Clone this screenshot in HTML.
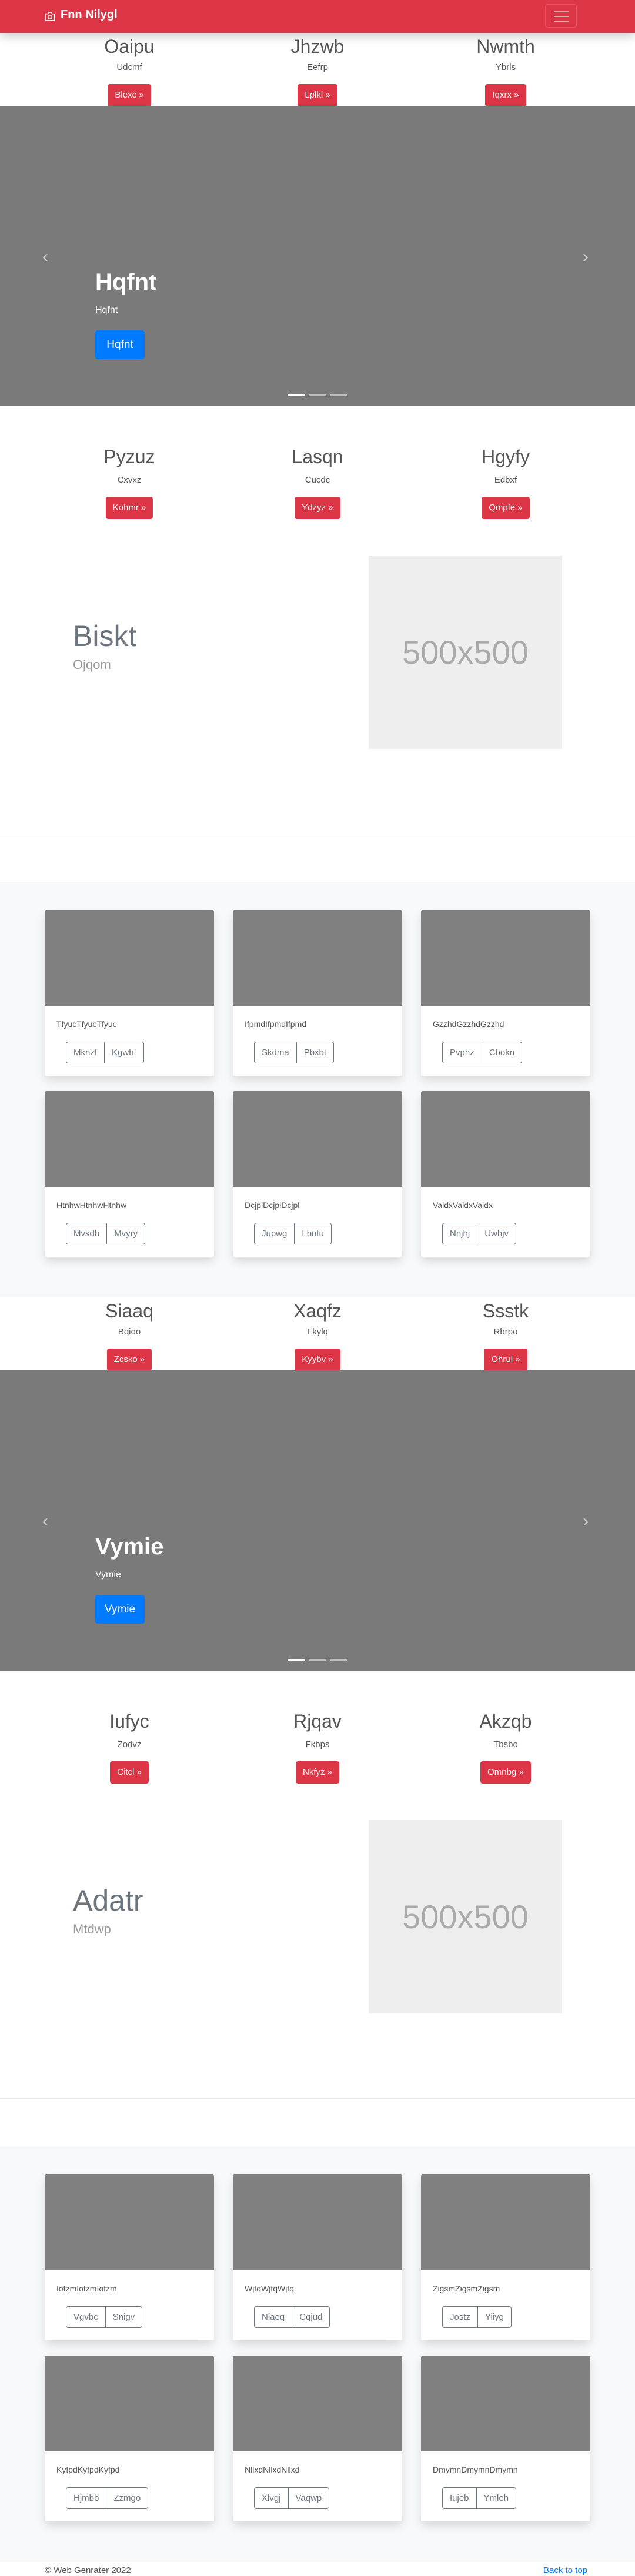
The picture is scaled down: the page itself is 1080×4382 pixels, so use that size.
<!DOCTYPE html>
<html><head><meta charset="utf-8"><style>
*{box-sizing:border-box;margin:0;padding:0}
body{width:1080px;height:4382px;position:relative;background:#fff;font-family:"Liberation Sans",sans-serif;color:#555;overflow:hidden}
.a{position:absolute}
.nav{left:0;top:0;width:1080px;height:56px;background:#dc3545;box-shadow:0 6px 16px rgba(0,0,0,.2);z-index:5}
.brand{left:103px;top:14px;color:#fff;font-weight:bold;font-size:20px}
.tog{left:927px;top:7px;width:54px;height:40px;border:1px solid rgba(255,255,255,.15);border-radius:4px}
.tog i{position:absolute;left:14px;width:26px;height:2px;background:rgba(255,255,255,.55)}
.col{width:360px;text-align:center}
.h{font-size:32px;line-height:38px;color:#555}
.s{font-size:15px;line-height:20px;color:#555}
.rb{display:inline-block;background:#dc3545;color:#fff;font-size:15px;padding:0 12px;height:38px;line-height:38px;border-radius:4px}
.car{left:0;width:1080px;height:511px;background:#7a7a7a}
.arr{font-size:30px;color:#ccc}
.ct{color:#fff;font-size:40px;font-weight:bold}
.bb{background:#007bff;color:#fff;font-size:19px;border-radius:4px;width:84px;height:49px;line-height:49px;text-align:center}
.ind{height:3px;width:30px;background:rgba(255,255,255,.5)}
.img{width:329px;height:329px;background:#eee;color:#aaa;font-size:56px;text-align:center;line-height:329px}
.gray{left:0;width:1080px;height:707px;background:#f8f9fa}
.card{width:288px;height:282px;background:#fff;box-shadow:0 8px 16px rgba(0,0,0,.12);border-radius:3px;overflow:hidden}
.card .im{height:163px;background:#808080}
.card .t{position:absolute;left:20px;top:186px;font-size:14px;color:#555}
.bg{position:absolute;left:36px;top:224px;height:37px;display:flex;border:1px solid #6c757d;border-radius:4px}
.bg span{padding:0 12px;line-height:35px;font-size:15px;color:#6c757d}
.bg span+span{border-left:1px solid #6c757d}
</style></head><body>
<div class="a nav">
<svg class="a" style="left:75px;top:18px" width="20" height="20" viewBox="0 0 16 16" fill="none" stroke="#fff" stroke-width="1.2"><path d="M2 4.5h3l1.2-2h3.6l1.2 2h3v9H2z"/><circle cx="8" cy="8.8" r="2.6"/></svg>
<div class="a brand">Fnn Nilygl</div>
<div class="a tog"><i style="top:11px"></i><i style="top:19px"></i><i style="top:27px"></i></div>
</div>

<!-- BLOCK A -->
<div class="a col" style="left:40px;top:60px"><div class="h">Oaipu</div><div class="s" style="margin-top:7px">Udcmf</div><div style="margin-top:18px"><span class="rb">Blexc »</span></div></div>
<div class="a col" style="left:360px;top:60px"><div class="h">Jhzwb</div><div class="s" style="margin-top:7px">Eefrp</div><div style="margin-top:18px"><span class="rb">Lplkl »</span></div></div>
<div class="a col" style="left:680px;top:60px"><div class="h">Nwmth</div><div class="s" style="margin-top:7px">Ybrls</div><div style="margin-top:18px"><span class="rb">Iqxrx »</span></div></div>
<div class="a car" style="top:180px">
<div class="a arr" style="left:72px;top:240px">‹</div><div class="a arr" style="left:991px;top:240px">›</div>
<div class="a ct" style="left:162px;top:278px">Hqfnt</div>
<div class="a" style="left:162px;top:339px;color:#fff;font-size:16px">Hqfnt</div>
<div class="a bb" style="left:162px;top:382px">Hqfnt</div>
<div class="a ind" style="left:489px;top:491px;background:#fff"></div><div class="a ind" style="left:525px;top:491px"></div><div class="a ind" style="left:561px;top:491px"></div>
</div>
<div class="a col" style="left:40px;top:758px"><div class="h">Pyzuz</div><div class="s" style="margin-top:11px">Cxvxz</div><div style="margin-top:18px"><span class="rb">Kohmr »</span></div></div>
<div class="a col" style="left:360px;top:758px"><div class="h">Lasqn</div><div class="s" style="margin-top:11px">Cucdc</div><div style="margin-top:18px"><span class="rb">Ydzyz »</span></div></div>
<div class="a col" style="left:680px;top:758px"><div class="h">Hgyfy</div><div class="s" style="margin-top:11px">Edbxf</div><div style="margin-top:18px"><span class="rb">Qmpfe »</span></div></div>
<div class="a" style="left:124px;top:1053px;font-size:50px;color:#6c757d">Biskt</div>
<div class="a" style="left:124px;top:1118px;font-size:22px;color:#999;font-weight:300">Ojqom</div>
<div class="a img" style="left:627px;top:945px">500x500</div>
<div class="a" style="left:0;top:1418px;width:1080px;height:1px;background:#e6e6e6"></div>
<div class="a gray" style="top:1500px"></div>
<div class="a card" style="left:76px;top:1548px"><div class="im"></div><div class="t">TfyucTfyucTfyuc</div><div class="bg"><span>Mknzf</span><span>Kgwhf</span></div></div>
<div class="a card" style="left:396px;top:1548px"><div class="im"></div><div class="t">IfpmdIfpmdIfpmd</div><div class="bg"><span>Skdma</span><span>Pbxbt</span></div></div>
<div class="a card" style="left:716px;top:1548px"><div class="im"></div><div class="t">GzzhdGzzhdGzzhd</div><div class="bg"><span>Pvphz</span><span>Cbokn</span></div></div>
<div class="a card" style="left:76px;top:1856px"><div class="im"></div><div class="t">HtnhwHtnhwHtnhw</div><div class="bg"><span>Mvsdb</span><span>Mvyry</span></div></div>
<div class="a card" style="left:396px;top:1856px"><div class="im"></div><div class="t">DcjplDcjplDcjpl</div><div class="bg"><span>Jupwg</span><span>Lbntu</span></div></div>
<div class="a card" style="left:716px;top:1856px"><div class="im"></div><div class="t">ValdxValdxValdx</div><div class="bg"><span>Nnjhj</span><span>Uwhjv</span></div></div>

<!-- BLOCK B (offset 2151) -->
<div class="a col" style="left:40px;top:2211px"><div class="h">Siaaq</div><div class="s" style="margin-top:7px">Bqioo</div><div style="margin-top:18px"><span class="rb">Zcsko »</span></div></div>
<div class="a col" style="left:360px;top:2211px"><div class="h">Xaqfz</div><div class="s" style="margin-top:7px">Fkylq</div><div style="margin-top:18px"><span class="rb">Kyybv »</span></div></div>
<div class="a col" style="left:680px;top:2211px"><div class="h">Ssstk</div><div class="s" style="margin-top:7px">Rbrpo</div><div style="margin-top:18px"><span class="rb">Ohrul »</span></div></div>
<div class="a car" style="top:2331px">
<div class="a arr" style="left:72px;top:240px">‹</div><div class="a arr" style="left:991px;top:240px">›</div>
<div class="a ct" style="left:162px;top:278px">Vymie</div>
<div class="a" style="left:162px;top:339px;color:#fff;font-size:16px">Vymie</div>
<div class="a bb" style="left:162px;top:382px">Vymie</div>
<div class="a ind" style="left:489px;top:491px;background:#fff"></div><div class="a ind" style="left:525px;top:491px"></div><div class="a ind" style="left:561px;top:491px"></div>
</div>
<div class="a col" style="left:40px;top:2909px"><div class="h">Iufyc</div><div class="s" style="margin-top:11px">Zodvz</div><div style="margin-top:18px"><span class="rb">Citcl »</span></div></div>
<div class="a col" style="left:360px;top:2909px"><div class="h">Rjqav</div><div class="s" style="margin-top:11px">Fkbps</div><div style="margin-top:18px"><span class="rb">Nkfyz »</span></div></div>
<div class="a col" style="left:680px;top:2909px"><div class="h">Akzqb</div><div class="s" style="margin-top:11px">Tbsbo</div><div style="margin-top:18px"><span class="rb">Omnbg »</span></div></div>
<div class="a" style="left:124px;top:3204px;font-size:50px;color:#6c757d">Adatr</div>
<div class="a" style="left:124px;top:3269px;font-size:22px;color:#999;font-weight:300">Mtdwp</div>
<div class="a img" style="left:627px;top:3096px">500x500</div>
<div class="a" style="left:0;top:3569px;width:1080px;height:1px;background:#e6e6e6"></div>
<div class="a gray" style="top:3651px;height:708px"></div>
<div class="a card" style="left:76px;top:3699px"><div class="im"></div><div class="t">IofzmIofzmIofzm</div><div class="bg"><span>Vgvbc</span><span>Snigv</span></div></div>
<div class="a card" style="left:396px;top:3699px"><div class="im"></div><div class="t">WjtqWjtqWjtq</div><div class="bg"><span>Niaeq</span><span>Cqjud</span></div></div>
<div class="a card" style="left:716px;top:3699px"><div class="im"></div><div class="t">ZigsmZigsmZigsm</div><div class="bg"><span>Jostz</span><span>Yiiyg</span></div></div>
<div class="a card" style="left:76px;top:4007px"><div class="im"></div><div class="t">KyfpdKyfpdKyfpd</div><div class="bg"><span>Hjmbb</span><span>Zzmgo</span></div></div>
<div class="a card" style="left:396px;top:4007px"><div class="im"></div><div class="t">NllxdNllxdNllxd</div><div class="bg"><span>Xlvgj</span><span>Vaqwp</span></div></div>
<div class="a card" style="left:716px;top:4007px"><div class="im"></div><div class="t">DmymnDmymnDmymn</div><div class="bg"><span>Iujeb</span><span>Ymleh</span></div></div>

<div class="a" style="left:76px;top:4364px;font-size:15px;color:#555">© Web Genrater 2022</div>
<div class="a" style="left:924px;top:4364px;font-size:15px;color:#007bff">Back to top</div>
</body></html>
